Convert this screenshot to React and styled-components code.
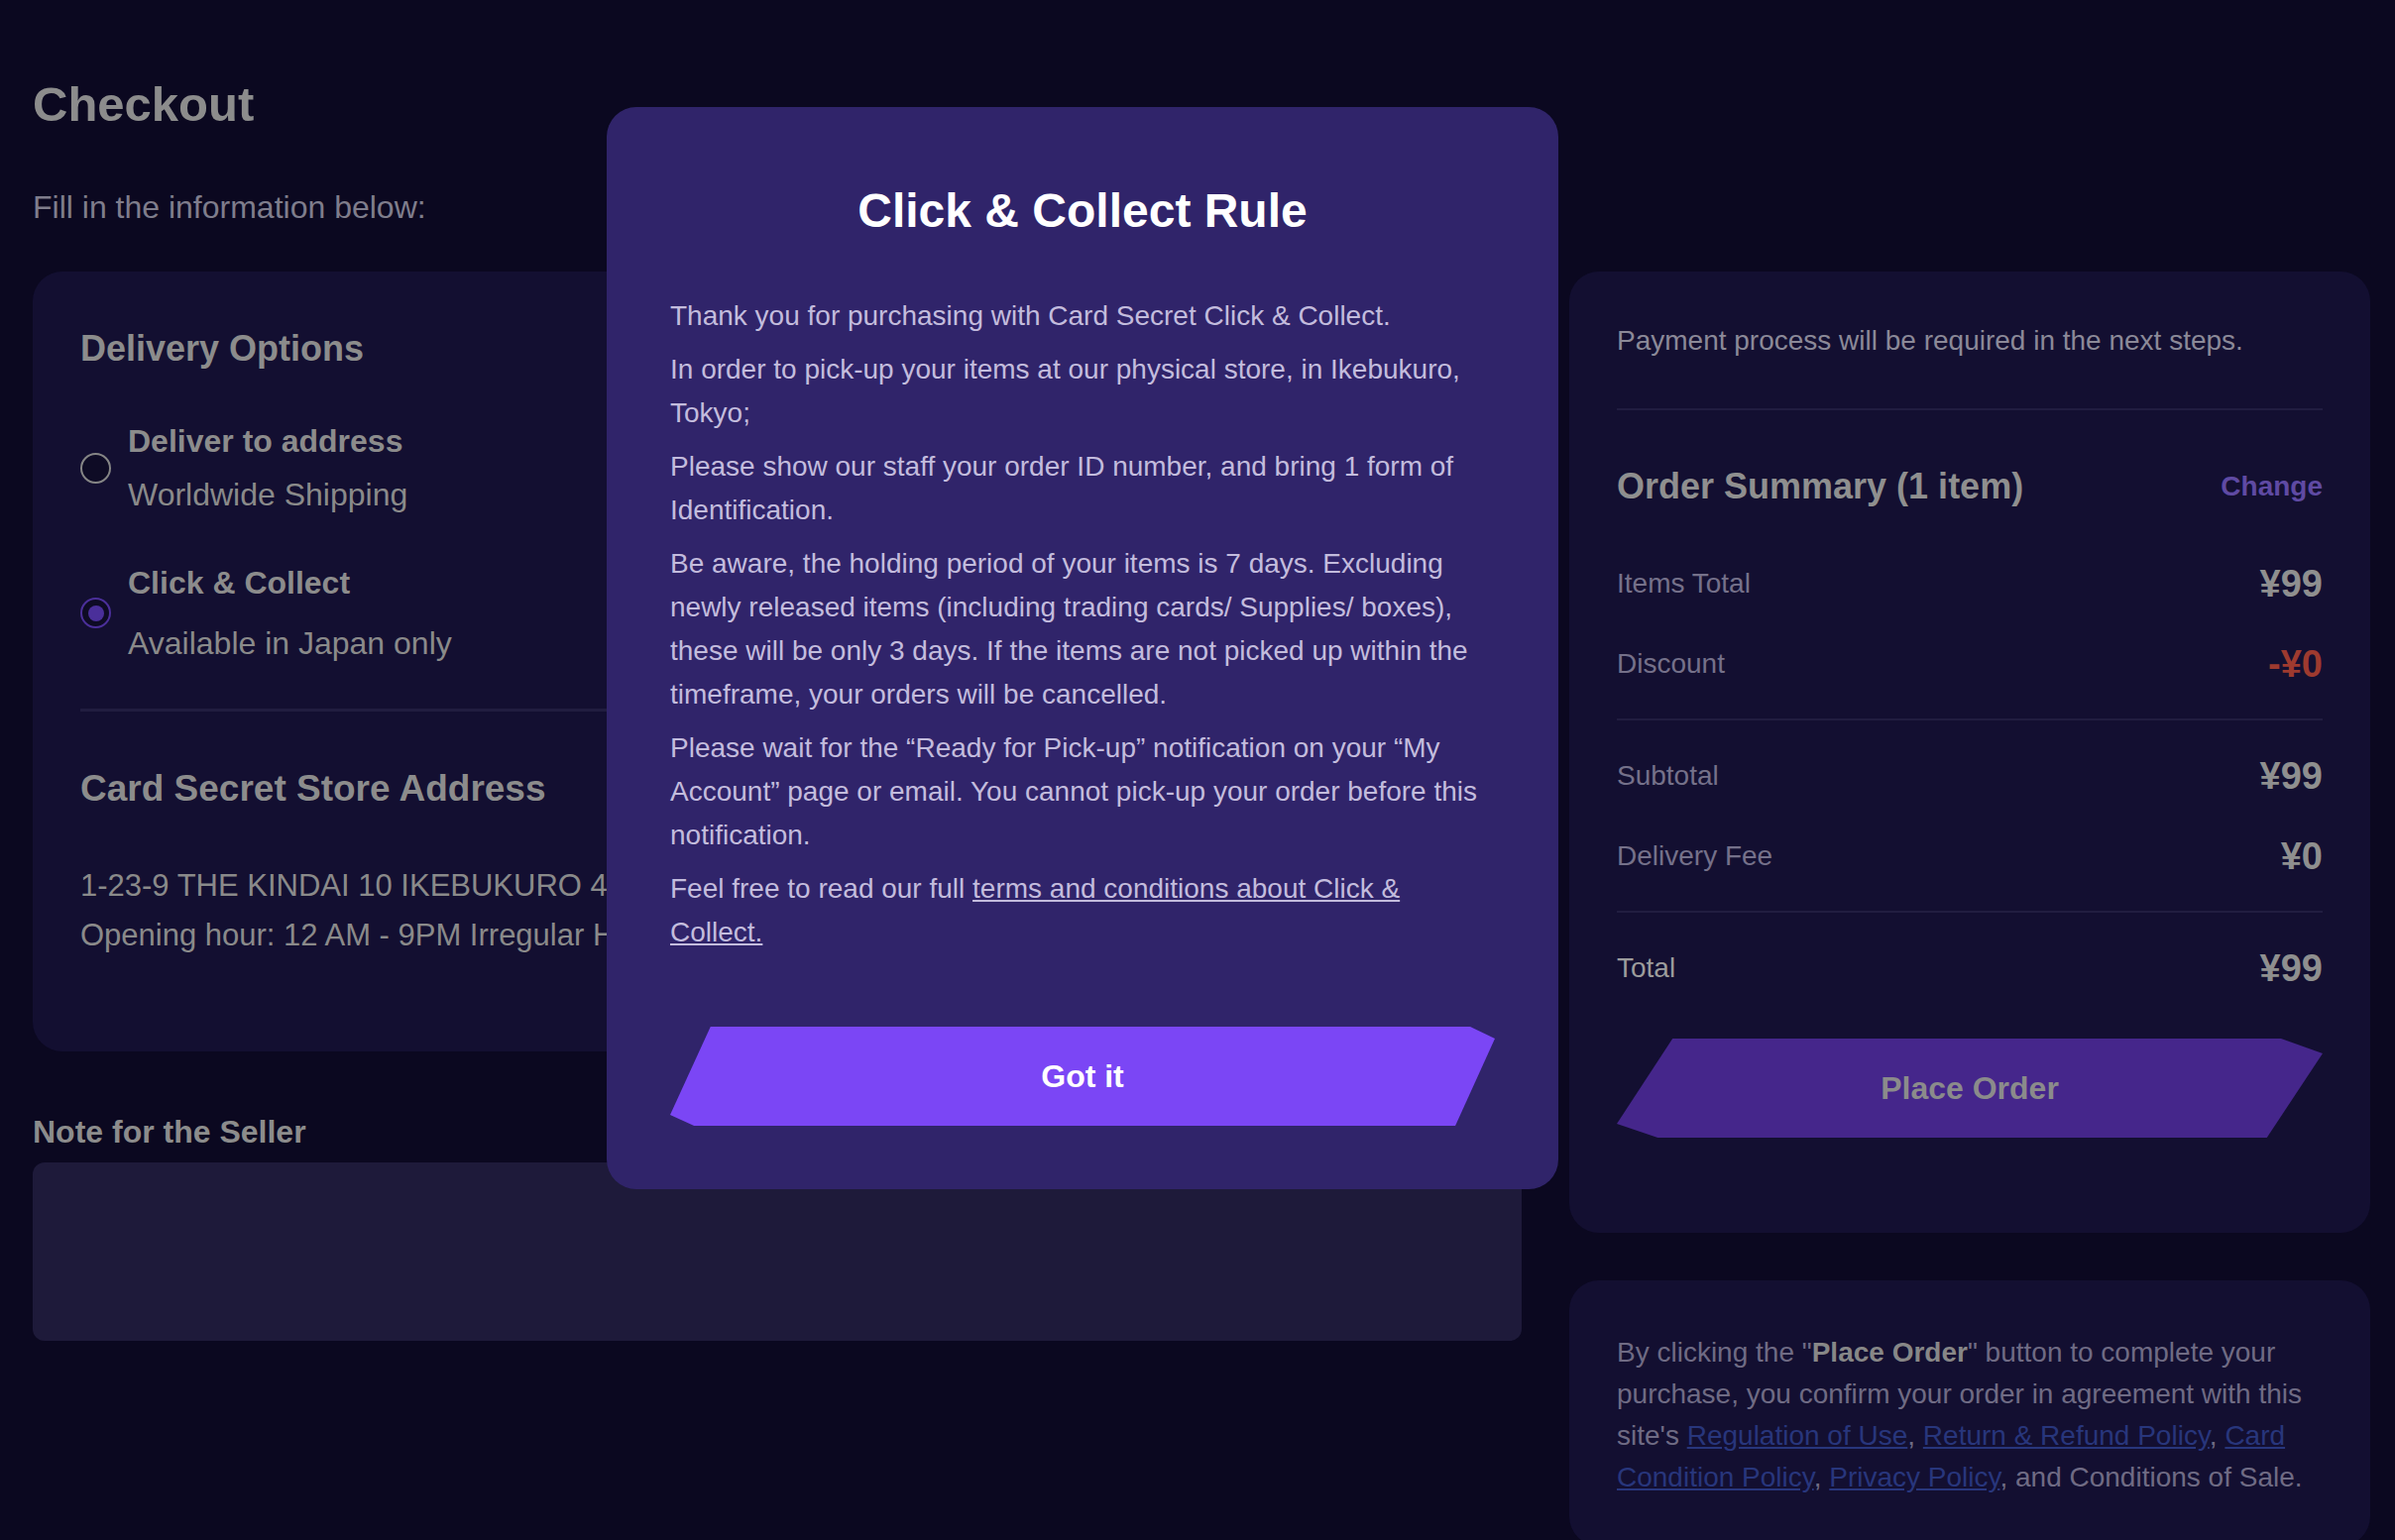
import React from "react";
import styled, { createGlobalStyle } from "styled-components";

const GlobalStyle = createGlobalStyle`
  html, body {
    margin: 0;
    padding: 0;
    background: #0b0820;
    overflow: hidden;
  }
  * { box-sizing: border-box; }
  body {
    font-family: "Liberation Sans", Arial, sans-serif;
  }
`;

const Page = styled.div`
  height: 100vh;
  overflow: hidden;
  padding: 76px 25px 0 33px;
  background: #0b0820;
`;

const Title = styled.h1`
  margin: 0;
  font-size: 49px;
  line-height: 58px;
  font-weight: 700;
  color: #8c8c8c;
`;

const Subtitle = styled.p`
  margin: 54px 0 0;
  font-size: 32px;
  line-height: 42px;
  color: #7f7d8c;
`;

const Columns = styled.div`
  display: grid;
  grid-template-columns: 1502px 808px;
  gap: 48px;
  margin-top: 44px;
  align-items: start;
`;

const Column = styled.div`
  display: flex;
  flex-direction: column;
  gap: ${(p) => p.$gap || 0}px;
`;

const Panel = styled.section`
  background: #130f31;
  border-radius: 30px;
  padding: ${(p) => p.$pad};
  overflow: hidden;
`;

const SectionTitle = styled.h2`
  margin: ${(p) => p.$mt || 0}px 0 0;
  font-size: ${(p) => p.$size || 36}px;
  line-height: 44px;
  font-weight: 700;
  color: #8c8c8c;
  white-space: nowrap;
`;

const Options = styled.div`
  display: flex;
  flex-direction: column;
  gap: 45px;
  margin-top: 49px;
`;

const Option = styled.label`
  display: flex;
  align-items: center;
  gap: 17px;
`;

const Radio = styled.span`
  position: relative;
  width: 31px;
  height: 31px;
  flex: none;
  border-radius: 50%;
  border: 2px solid ${(p) => (p.$checked ? "#4b2f9a" : "#858585")};
  background: #0e0b25;

  &::after {
    content: "";
    display: ${(p) => (p.$checked ? "block" : "none")};
    position: absolute;
    inset: 5.5px;
    border-radius: 50%;
    background: #4a2f9a;
  }
`;

const OptionText = styled.div`
  display: flex;
  flex-direction: column;
  gap: ${(p) => p.$gap || 12}px;
`;

const OptionName = styled.span`
  font-size: 32px;
  line-height: 44px;
  font-weight: 700;
  color: #8c8c8c;
`;

const OptionNote = styled.span`
  font-size: 32px;
  line-height: 44px;
  color: #8a8a8a;
`;

const Divider = styled.div`
  height: ${(p) => p.$h || 2}px;
  background: #211d40;
  margin-top: ${(p) => p.$mt || 0}px;
`;

const Address = styled.p`
  margin: 51px 0 0;
  font-size: 31px;
  line-height: 50px;
  color: #8a8a8a;
  white-space: nowrap;
`;

const NoteLabel = styled.h3`
  margin: 61px 0 0;
  font-size: 32px;
  line-height: 40px;
  font-weight: 700;
  color: #8c8c8c;
`;

const NoteArea = styled.textarea`
  margin-top: 11px;
  height: 180px;
  width: 100%;
  resize: none;
  border: none;
  outline: none;
  border-radius: 12px;
  background: #1e1a3a;
  color: #8a8a8a;
  font: 28px "Liberation Sans", Arial, sans-serif;
  padding: 20px 24px;
`;

const Info = styled.p`
  margin: 0;
  font-size: 28px;
  line-height: 42px;
  color: #8b8998;
`;

const SummaryHead = styled.div`
  display: flex;
  justify-content: space-between;
  align-items: center;
  margin-top: 55px;
  height: 44px;
`;

const SummaryTitle = styled.h2`
  margin: 0;
  font-size: 36px;
  font-weight: 700;
  color: #8f8f8f;
`;

const ChangeLink = styled.a`
  font-size: 28px;
  font-weight: 700;
  color: #5f4aa3;
  text-decoration: none;
`;

const Rows = styled.div`
  display: flex;
  flex-direction: column;
  gap: 39px;
  padding: ${(p) => p.$pad};
`;

const Row = styled.div`
  display: flex;
  justify-content: space-between;
  align-items: center;
  height: 42px;
`;

const RowLabel = styled.span`
  font-size: 28px;
  color: ${(p) => (p.$strong ? "#9c9c9c" : "#75718a")};
`;

const RowValue = styled.span`
  font-size: 38px;
  font-weight: 700;
  color: ${(p) => (p.$negative ? "#9e3a2f" : "#8f8f8f")};
`;

const SlantButton = styled.button`
  display: flex;
  align-items: center;
  justify-content: center;
  width: 100%;
  height: 100px;
  margin-top: ${(p) => p.$mt || 0}px;
  border: none;
  background: ${(p) => p.$bg};
  color: ${(p) => p.$fg};
  clip-path: ${(p) => p.$clip};
  font: 700 32px "Liberation Sans", Arial, sans-serif;
  cursor: pointer;
`;

const Legal = styled.p`
  margin: 0;
  font-size: 28px;
  line-height: 42px;
  color: #6f6b84;

  b {
    color: #878787;
  }

  a {
    color: #28367c;
    text-decoration: underline;
  }
`;

const Overlay = styled.div`
  position: fixed;
  inset: 0;
  display: flex;
  align-items: flex-start;
  padding: 108px 0 0 612px;
  z-index: 10;
`;

const Modal = styled.div`
  width: 960px;
  background: #30246a;
  border-radius: 30px;
  padding: 76px 64px 64px;
`;

const ModalTitle = styled.h2`
  margin: 0 0 55px;
  text-align: center;
  font-size: 48px;
  line-height: 58px;
  font-weight: 700;
  color: #ffffff;
`;

const ModalText = styled.p`
  margin: 0 0 10px;
  font-size: 28px;
  line-height: 44px;
  color: #c3bcdd;

  a {
    color: inherit;
    text-decoration: underline;
  }
`;

const rules = [
  "Thank you for purchasing with Card Secret Click & Collect.",
  "In order to pick-up your items at our physical store, in Ikebukuro, Tokyo;",
  "Please show our staff your order ID number, and bring 1 form of Identification.",
  "Be aware, the holding period of your items is 7 days. Excluding newly released items (including trading cards/ Supplies/ boxes), these will be only 3 days. If the items are not picked up within the timeframe, your orders will be cancelled.",
  "Please wait for the \u201CReady for Pick-up\u201D notification on your \u201CMy Account\u201D page or email. You cannot pick-up your order before this notification.",
];

export default function App() {
  return (
    <>
      <GlobalStyle />
      <Page>
        <Title>Checkout</Title>
        <Subtitle>Fill in the information below:</Subtitle>

        <Columns>
          <Column>
            <Panel $pad="56px 48px 92px">
              <SectionTitle>Delivery Options</SectionTitle>
              <Options>
                <Option>
                  <Radio />
                  <OptionText $gap={10}>
                    <OptionName>Deliver to address</OptionName>
                    <OptionNote>Worldwide Shipping</OptionNote>
                  </OptionText>
                </Option>
                <Option>
                  <Radio $checked />
                  <OptionText $gap={17}>
                    <OptionName>Click &amp; Collect</OptionName>
                    <OptionNote>Available in Japan only</OptionNote>
                  </OptionText>
                </Option>
              </Options>
              <Divider $h={3} $mt={44} />
              <SectionTitle $mt={56} $size={37}>Card Secret Store Address</SectionTitle>
              <Address>
                1-23-9 THE KINDAI 10 IKEBUKURO 4th Floor
                <br />
                Opening hour: 12 AM - 9PM Irregular Holidays
              </Address>
            </Panel>
            <NoteLabel>Note for the Seller</NoteLabel>
            <NoteArea />
          </Column>

          <Column $gap={48}>
            <Panel $pad="49px 48px 96px">
              <Info>Payment process will be required in the next steps.</Info>
              <Divider $mt={47} />
              <SummaryHead>
                <SummaryTitle>Order Summary (1 item)</SummaryTitle>
                <ChangeLink href="#">Change</ChangeLink>
              </SummaryHead>
              <Rows $pad="55px 0 34px">
                <Row>
                  <RowLabel>Items Total</RowLabel>
                  <RowValue>¥99</RowValue>
                </Row>
                <Row>
                  <RowLabel>Discount</RowLabel>
                  <RowValue $negative>-¥0</RowValue>
                </Row>
              </Rows>
              <Divider />
              <Rows $pad="35px 0 34px">
                <Row>
                  <RowLabel>Subtotal</RowLabel>
                  <RowValue>¥99</RowValue>
                </Row>
                <Row>
                  <RowLabel>Delivery Fee</RowLabel>
                  <RowValue>¥0</RowValue>
                </Row>
              </Rows>
              <Divider />
              <Rows $pad="35px 0 0">
                <Row>
                  <RowLabel $strong>Total</RowLabel>
                  <RowValue>¥99</RowValue>
                </Row>
              </Rows>
              <SlantButton
                $mt={50}
                $bg="#45268b"
                $fg="#8b8b8b"
                $clip="polygon(7.9% 0, 94.1% 0, 100% 15%, 92.1% 100%, 5.8% 100%, 0 86%)"
              >
                Place Order
              </SlantButton>
            </Panel>

            <Panel $pad="52px 48px 48px">
              <Legal>
                By clicking the "<b>Place Order</b>" button to complete your purchase, you confirm
                your order in agreement with this site's <a href="#">Regulation of Use</a>,{" "}
                <a href="#">Return &amp; Refund Policy</a>, <a href="#">Card Condition Policy</a>,{" "}
                <a href="#">Privacy Policy</a>, and Conditions of Sale.
              </Legal>
            </Panel>
          </Column>
        </Columns>
      </Page>

      <Overlay>
        <Modal>
          <ModalTitle>Click &amp; Collect Rule</ModalTitle>
          {rules.map((r) => (
            <ModalText key={r}>{r}</ModalText>
          ))}
          <ModalText>
            Feel free to read our full <a href="#">terms and conditions about Click &amp; Collect.</a>
          </ModalText>
          <SlantButton
            $mt={73}
            $bg="#7b46f5"
            $fg="#ffffff"
            $clip="polygon(4.9% 0, 97% 0, 100% 12%, 95.2% 100%, 2.9% 100%, 0 89%)"
          >
            Got it
          </SlantButton>
        </Modal>
      </Overlay>
    </>
  );
}
